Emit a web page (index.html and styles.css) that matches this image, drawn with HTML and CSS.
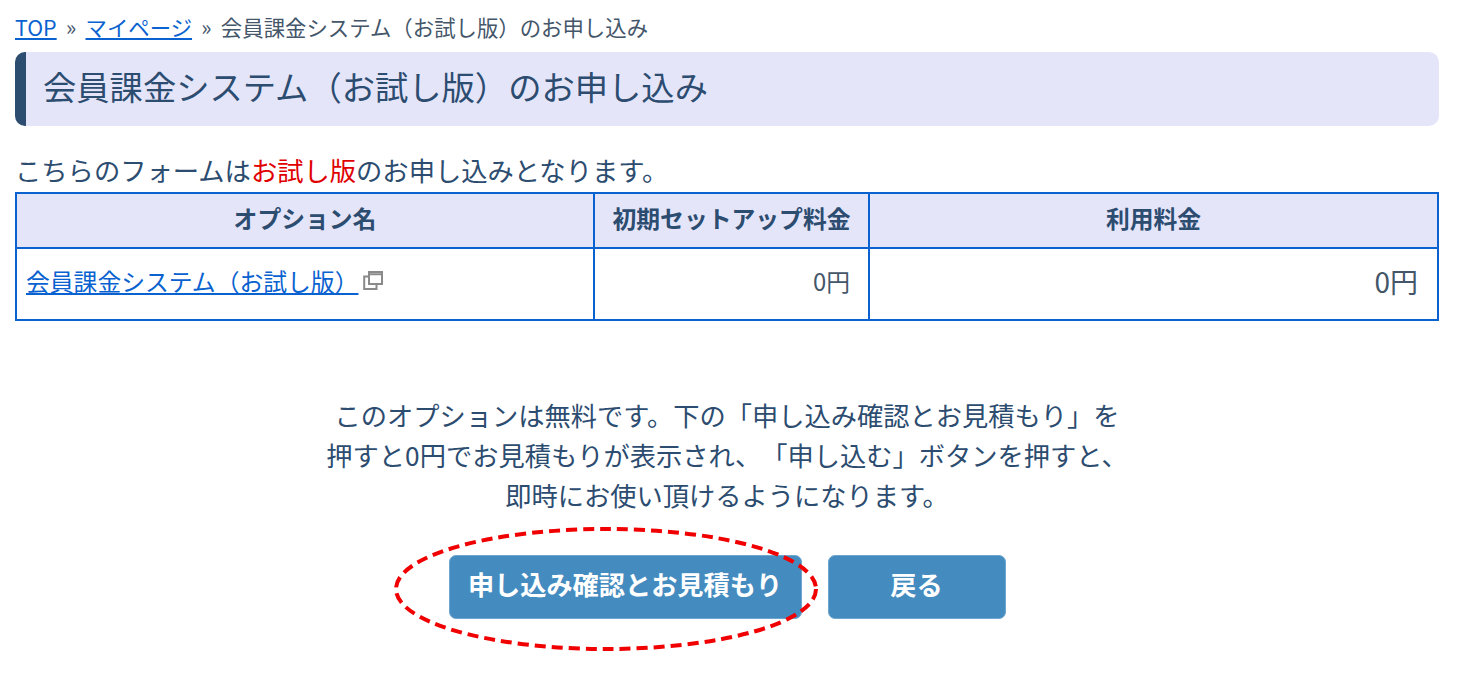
FILE: index.html
```html
<!DOCTYPE html>
<html lang="ja">
<head>
<meta charset="utf-8">
<title>会員課金システム（お試し版）のお申し込み</title>
<link rel="stylesheet" href="styles.css">
</head>
<body>
<main class="page">
  <nav class="crumbs"><a href="#">TOP</a> » <a href="#">マイページ</a> » 会員課金システム（お試し版）のお申し込み</nav>
  <h1 class="title">会員課金システム（お試し版）のお申し込み</h1>
  <p class="lead">こちらのフォームは<span class="red">お試し版</span>のお申し込みとなります。</p>
  <table class="options">
    <colgroup><col class="c1"><col class="c2"><col class="c3"></colgroup>
    <thead>
      <tr><th>オプション名</th><th>初期セットアップ料金</th><th>利用料金</th></tr>
    </thead>
    <tbody>
      <tr>
        <td class="name"><a href="#">会員課金システム（お試し版）</a><svg class="ext" viewBox="0 0 20 20" width="20" height="20" aria-hidden="true"><path d="M6 2h13v12H6z M6 4.2h13" fill="none" stroke="#8a8a8a" stroke-width="2"/><path d="M6 6.5H1.2V19h12.3v-5" fill="none" stroke="#8a8a8a" stroke-width="2"/></svg></td>
        <td class="fee1">0円</td>
        <td class="fee2">0円</td>
      </tr>
    </tbody>
  </table>
  <p class="note">このオプションは無料です。下の「申し込み確認とお見積もり」を<br>押すと0円でお見積もりが表示され、「申し込む」ボタンを押すと、<br>即時にお使い頂けるようになります。</p>
  <div class="actions">
    <div class="confirm-wrap">
      <button class="btn btn-confirm" type="button">申し込み確認とお見積もり</button>
      <svg class="circle" viewBox="0 0 426 128" width="426" height="128" aria-hidden="true"><ellipse cx="213" cy="64" rx="210" ry="60" fill="none" stroke="#f00000" stroke-width="4" stroke-dasharray="11 6"/></svg>
    </div>
    <button class="btn btn-back" type="button">戻る</button>
  </div>
</main>
</body>
</html>
```
FILE: styles.css
```css
* { box-sizing: border-box; }
html, body { margin: 0; padding: 0; background: #fff; }
body {
  font-family: "Noto Sans CJK JP", "Noto Sans", sans-serif;
  color: #2c4c70;
  text-spacing-trim: space-all;
}
.page { height: 678px; padding: 13px 22px 0 15px; }
a { color: #0a62d0; }
.crumbs { font-size: 21.4px; line-height: 28px; height: 39px; color: #44566a; white-space: nowrap; word-spacing: 4.5px; }
.title {
  margin: 0;
  height: 74px;
  padding-left: 17px;
  font-size: 33.3px;
  line-height: 68px;
  font-weight: 400;
  background: #e5e5fa;
  border-left: 11px solid #2c4c70;
  border-radius: 10px;
  white-space: nowrap;
}
.lead { margin: 26px 0 0; font-size: 26.3px; line-height: 36px; height: 40px; white-space: nowrap; }
.red { color: #e00000; }
.options { width: 1424px; table-layout: fixed; border-collapse: collapse; border: 2px solid #0a62d0; }
.c1 { width: 578px; }
.c2 { width: 275px; }
.options th, .options td { border: 2px solid #0a62d0; padding: 0; }
.options th { height: 55px; padding-bottom: 6px; font-size: 23.8px; line-height: 30px; font-weight: 700; background: #e5e5fa; text-align: center; }
.options td { height: 72px; vertical-align: top; }
.options .name { font-size: 23.8px; line-height: 30px; padding: 17px 0 0 9px; white-space: nowrap; }
.ext { margin-left: 5px; vertical-align: 1px; }
.options .fee1 { font-size: 23.8px; line-height: 30px; padding: 17px 18px 0 0; text-align: right; color: #44566a; }
.options .fee2 { font-size: 28px; line-height: 34px; padding: 15px 19px 0 0; text-align: right; color: #44566a; }
.note { margin: 74px 0 0; font-size: 26.25px; line-height: 40px; text-align: center; white-space: nowrap; }
.actions { display: flex; justify-content: center; gap: 26px; margin-top: 40px; }
.confirm-wrap { position: relative; }
.btn {
  display: block;
  height: 64px;
  border: 1px solid #6fa6cf;
  border-radius: 7px;
  background: #448cc0;
  color: #fff;
  font-family: inherit;
  font-size: 26.2px;
  font-weight: 700;
  padding: 0 0 6px;
}
.btn-confirm { width: 353px; }
.btn-back { width: 178px; }
.circle { position: absolute; left: -56px; top: -30px; pointer-events: none; }
```
